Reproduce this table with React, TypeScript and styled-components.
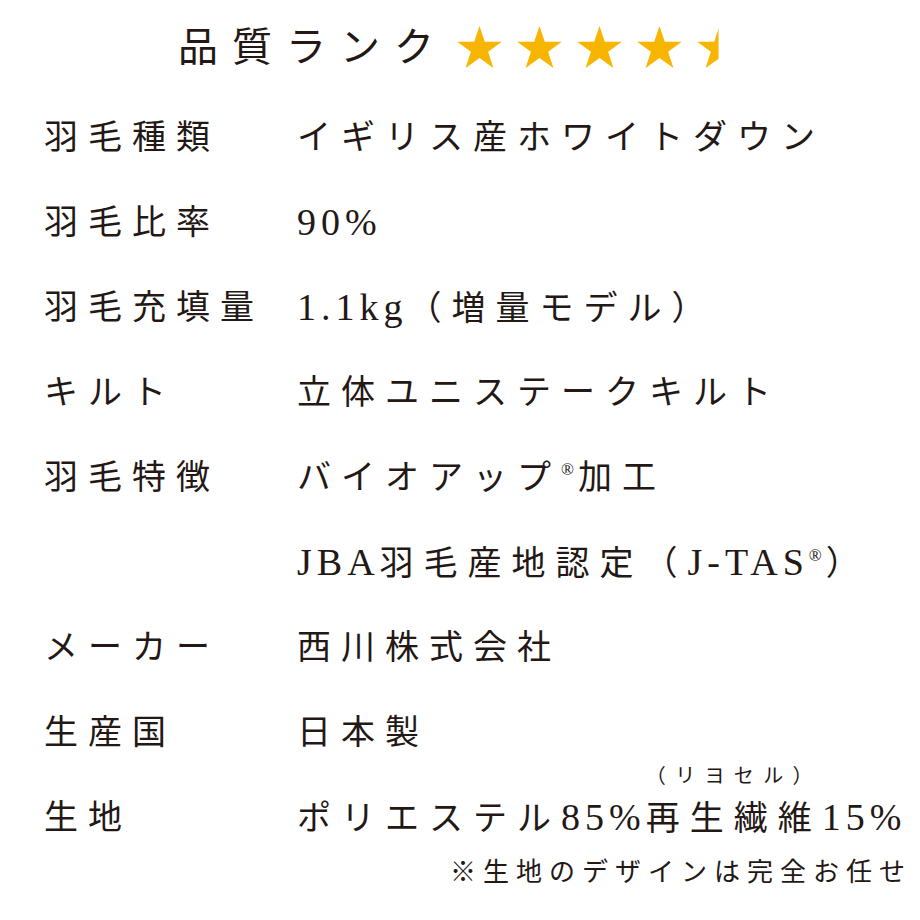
import React from 'react';
import styled, { createGlobalStyle } from 'styled-components';

const GlobalStyle = createGlobalStyle`
  html, body {
    margin: 0;
    padding: 0;
    background: #ffffff;
  }
  body {
    font-family: "Liberation Serif", "Noto Sans CJK JP", serif;
    color: #231815;
  }
`;

const Page = styled.div`
  width: 920px;
  height: 920px;
  box-sizing: border-box;
  padding: 0 0 0 44px;
  display: flex;
  flex-direction: column;
  overflow: hidden;
`;

const Header = styled.div`
  height: 95px;
  display: flex;
  align-items: center;
  padding-left: 134px;
  gap: 8px;
`;

const Title = styled.h1`
  margin: 0;
  font-size: 40px;
  font-weight: 400;
  letter-spacing: 14px;
  line-height: 1;
`;

const Stars = styled.div`
  display: flex;
  gap: 13px;
  align-items: center;
`;

const SpecTable = styled.div`
  display: grid;
  grid-template-columns: 253px 1fr;
  grid-auto-rows: 85px;
`;

const Cell = styled.div`
  font-size: 34px;
  letter-spacing: 10px;
  line-height: 85px;
  height: 85px;
  white-space: nowrap;
`;

// latin runs are set a bit larger and tighter, like the mincho's own latin glyphs
const Latin = styled.span`
  font-size: 38px;
  letter-spacing: 5px;
`;

const Mark = styled.sup`
  font-size: 17px;
  letter-spacing: 0;
  vertical-align: 14px;
  line-height: 0;
  margin-right: 4px;
`;

// the reading note floats a little higher above 再生繊維 than a plain ruby would
const Ruby = styled.ruby`
  ruby-position: over;
  rt {
    font-size: 20px;
    letter-spacing: 9px;
    line-height: 1;
    position: relative;
    top: -14px;
  }
`;

const Note = styled.div`
  align-self: flex-end;
  margin-top: 0;
  padding-right: 8px;
  font-size: 26px;
  letter-spacing: 7px;
  line-height: 1;
  white-space: nowrap;
`;

const StarIcon: React.FC<{ fill?: number; id: string }> = ({ fill = 1, id }) => (
  <svg width="47" height="45" viewBox="0 0 24 23">
    <defs>
      <clipPath id={id}>
        <rect x="0" y="0" width={24 * fill} height="23" />
      </clipPath>
    </defs>
    <path
      d="M12 0.5 L14.7 8.6 L23.4 8.6 L16.4 13.7 L19.1 22 L12 16.9 L4.9 22 L7.6 13.7 L0.6 8.6 L9.3 8.6 Z"
      fill="#F8B500"
      clipPath={`url(#${id})`}
    />
  </svg>
);

const specs: { label: string; value: React.ReactNode }[] = [
  { label: '羽毛種類', value: 'イギリス産ホワイトダウン' },
  { label: '羽毛比率', value: <Latin>90%</Latin> },
  {
    label: '羽毛充填量',
    value: (
      <>
        <Latin>1.1kg</Latin>（増量モデル）
      </>
    ),
  },
  { label: 'キルト', value: '立体ユニステークキルト' },
  {
    label: '羽毛特徴',
    value: (
      <>
        バイオアップ<Mark>®</Mark>加工
      </>
    ),
  },
  {
    label: '',
    value: (
      <>
        <Latin>JBA</Latin>羽毛産地認定（<Latin>J-TAS</Latin>
        <Mark>®</Mark>）
      </>
    ),
  },
  { label: 'メーカー', value: '西川株式会社' },
  { label: '生産国', value: '日本製' },
  {
    label: '生地',
    value: (
      <>
        ポリエステル<Latin>85%</Latin>
        <Ruby>
          再生繊維<rt>（リヨセル）</rt>
        </Ruby>
        <Latin>15%</Latin>
      </>
    ),
  },
];

const App: React.FC = () => {
  return (
    <>
      <GlobalStyle />
      <Page>
        <Header>
          <Title>品質ランク</Title>
          <Stars>
            {[1, 1, 1, 1, 0.48].map((f, i) => (
              <StarIcon key={i} fill={f} id={`star-${i}`} />
            ))}
          </Stars>
        </Header>
        <SpecTable>
          {specs.map((row, i) => (
            <React.Fragment key={i}>
              <Cell>{row.label}</Cell>
              <Cell>{row.value}</Cell>
            </React.Fragment>
          ))}
        </SpecTable>
        <Note>※生地のデザインは完全お任せ</Note>
      </Page>
    </>
  );
};

export default App;
